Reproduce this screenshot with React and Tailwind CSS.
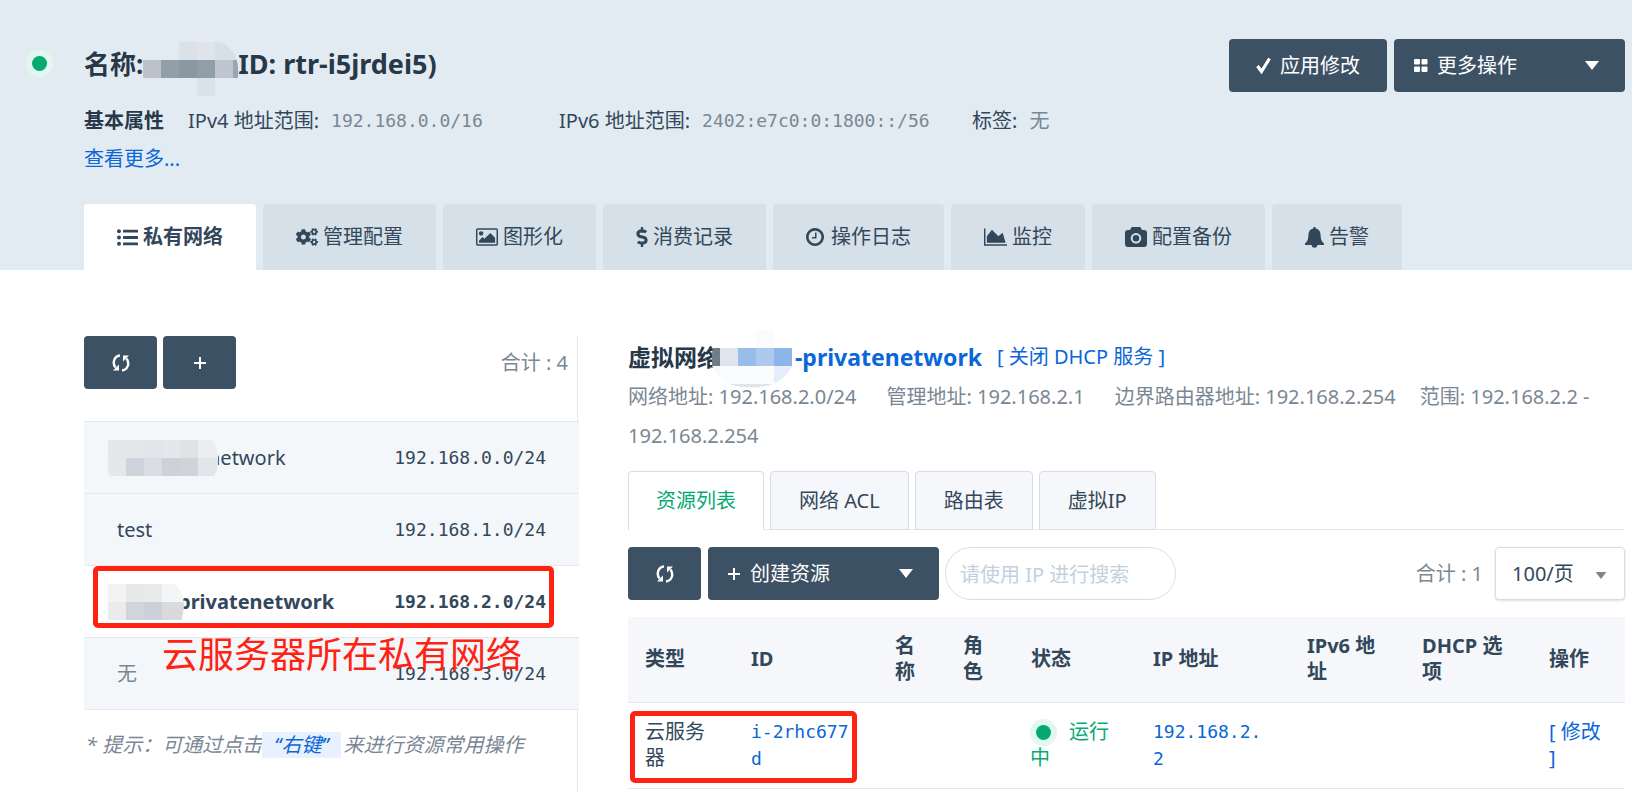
import React from "react";
import { FaCogs, FaDollarSign } from "react-icons/fa";

function ListIcon() {
  return (
    <svg viewBox="0 0 21 17" className="h-[17px] w-[21px]" fill="currentColor" aria-hidden="true">
      <circle cx="2" cy="2.200" r="2" />
      <circle cx="2" cy="8.500" r="2" />
      <circle cx="2" cy="14.800" r="2" />
      <rect x="6" y=".8" width="15" height="2.800" rx=".5" />
      <rect x="6" y="7.100" width="15" height="2.800" rx=".5" />
      <rect x="6" y="13.400" width="15" height="2.800" rx=".5" />
    </svg>
  );
}

function PictureIcon() {
  return (
    <svg viewBox="-64 128 1920 1536" className="h-[18px] w-[22px]" fill="currentColor" aria-hidden="true">
      <path d="M576 576q0 80-56 136t-136 56-136-56-56-136 56-136 136-56 136 56 56 136zm1024 384v448h-1408v-192l320-320 160 160 512-512zm96-704h-1600q-13 0-22.5 9.5t-9.5 22.5v1216q0 13 9.5 22.5t22.5 9.5h1600q13 0 22.5-9.5t9.5-22.5v-1216q0-13-9.5-22.5t-22.5-9.5zm160 32v1216q0 66-47 113t-113 47h-1600q-66 0-113-47t-47-113v-1216q0-66 47-113t113-47h1600q66 0 113 47t47 113z" />
    </svg>
  );
}

function ClockIcon() {
  return (
    <svg viewBox="128 128 1536 1536" className="mr-[2px] size-[18px]" fill="currentColor" aria-hidden="true">
      <path d="M1024 544v448q0 14-9 23t-23 9h-320q-14 0-23-9t-9-23v-64q0-14 9-23t23-9h224v-352q0-14 9-23t23-9h64q14 0 23 9t9 23zm416 352q0-148-73-273t-198-198-273-73-273 73-198 198-73 273 73 273 198 198 273 73 273-73 198-198 73-273zm224 0q0 209-103 385.5t-279.5 279.5-385.5 103-385.5-103-279.5-279.5-103-385.5 103-385.5 279.5-279.5 385.5-103 385.5 103 279.5 279.5 103 385.5z" />
    </svg>
  );
}

function AreaIcon() {
  return (
    <svg viewBox="0 128 2048 1536" className="h-[18px] w-[23px]" fill="currentColor" aria-hidden="true">
      <path d="M2048 1536v128h-2048v-1536h128v1408h1920zM1664 512l256 896h-1664v-576l448-576 576 576z" />
    </svg>
  );
}

function CameraIcon() {
  return (
    <svg viewBox="0 0 22 20" className="h-5 w-[22px]" fill="currentColor" aria-hidden="true">
      <path
        fillRule="evenodd"
        d="M7.6 0h6.8c.8 0 1.4.5 1.7 1.2l.8 1.8H19a3 3 0 0 1 3 3v11a3 3 0 0 1-3 3H3a3 3 0 0 1-3-3V6a3 3 0 0 1 3-3h2.100l.8-1.800C6.200.5 6.800 0 7.600 0ZM11 6a5.300 5.300 0 1 0 0 10.600A5.300 5.300 0 0 0 11 6Zm0 2a3.300 3.300 0 1 1 0 6.600A3.300 3.300 0 0 1 11 8Z"
      />
    </svg>
  );
}

function BellIcon() {
  return (
    <svg viewBox="0 0 19 21" className="h-[21px] w-[19px]" fill="currentColor" aria-hidden="true">
      <path d="M9.500 0c.8 0 1.300.6 1.300 1.400 2.900.6 4.600 2.800 4.700 5.600.2 5 .8 7 3.500 9.500v1.500h-6.700a2.800 2.800 0 0 1-5.600 0H0v-1.500C2.700 14 3.300 12 3.500 7c.1-2.800 1.800-5 4.700-5.600C8.200.6 8.700 0 9.500 0Z" />
    </svg>
  );
}

function RefreshIcon() {
  return (
    <svg viewBox="0 0 18 18" className="size-[18px]" fill="none" stroke="currentColor" strokeWidth="2.400" aria-hidden="true">
      <path d="M8 1.500C2.500 2 -.2 8.500 3.500 13.500" />
      <path d="M1 16.500 7 10.500V16.500Z" fill="currentColor" stroke="none" />
      <path d="M10 16.500C15.500 16 18.200 9.500 14.500 4.500" />
      <path d="M17 1.500 11 7.500V1.500Z" fill="currentColor" stroke="none" />
    </svg>
  );
}

function PlusIcon() {
  return (
    <svg viewBox="0 0 12 12" className="size-3" stroke="currentColor" strokeWidth="2" aria-hidden="true">
      <path d="M6 0v12M0 6h12" />
    </svg>
  );
}

function CaretIcon({ className }) {
  return (
    <svg viewBox="0 0 14 9" className={className} fill="currentColor" aria-hidden="true">
      <path d="M0 0h14L7 9Z" />
    </svg>
  );
}

function CheckIcon() {
  return (
    <svg viewBox="0 0 15 17" className="h-[17px] w-[15px]" fill="none" stroke="currentColor" strokeWidth="3.200" aria-hidden="true">
      <path d="M1.500 9 5.500 14.500 13.500 1.500" />
    </svg>
  );
}

function GridIcon() {
  return (
    <svg viewBox="0 0 14 13" className="h-[13px] w-[14px]" fill="currentColor" aria-hidden="true">
      <rect width="6" height="5.500" rx="1" />
      <rect x="7.500" width="6" height="5.500" rx="1" />
      <rect y="7.500" width="6" height="5.500" rx="1" />
      <rect x="7.500" y="7.500" width="6" height="5.500" rx="1" />
    </svg>
  );
}

function Mosaic({ id, width, height, outline, cells, className }) {
  return (
    <svg viewBox={`0 0 ${width} ${height}`} width={width} height={height} className={className} aria-hidden="true">
      <clipPath id={id}>
        <path d={outline} />
      </clipPath>
      <g clipPath={`url(#${id})`}>
        {cells.map(([x, y, w, h, fill]) => (
          <rect key={`${x}-${y}`} x={x} y={y} width={w} height={h} fill={fill} />
        ))}
      </g>
    </svg>
  );
}

function StatusDot() {
  return (
    <span className="inline-flex size-[27px] shrink-0 items-center justify-center rounded-full bg-[#e2f7ef]">
      <span className="size-[15px] rounded-full bg-[#04aa72]" />
    </span>
  );
}

const MONO = "font-['DejaVu_Sans_Mono',monospace] text-[18px]";
const DARK_BUTTON = "flex h-[53px] items-center rounded bg-[#3d5165] text-white";

const tabs = [
  { label: "私有网络", icon: <ListIcon />, active: true },
  { label: "管理配置", icon: <FaCogs className="size-[22px]" /> },
  { label: "图形化", icon: <PictureIcon /> },
  { label: "消费记录", icon: <FaDollarSign className="h-5 w-3" /> },
  { label: "操作日志", icon: <ClockIcon /> },
  { label: "监控", icon: <AreaIcon /> },
  { label: "配置备份", icon: <CameraIcon /> },
  { label: "告警", icon: <BellIcon /> },
];

function Header() {
  return (
    <header className="flex bg-[#e3ebf2] pr-[7px]">
      <div className="flex w-[84px] shrink-0 pt-[50px] pl-[26px]">
        <StatusDot />
      </div>
      <div className="min-w-0 flex-1">
        <div className="flex items-start justify-between pt-[39px]">
          <h1 className="flex h-[50px] items-center text-[26px] font-bold whitespace-nowrap text-[#273849]">
            名称:
            <Mosaic
              id="name-mask"
              width={95}
              height={56}
              className="mt-3 shrink-0"
              outline="M0 17H4Q14 0 36 0H78Q95 10 95 26V35Q86 54 70 56H36L0 36Z"
              cells={[
                [36, 0, 18, 18, "#dbe1e7"],
                [54, 0, 18, 18, "#dfe4ea"],
                [72, 0, 23, 18, "#d8e0e7"],
                [0, 18, 18, 18, "#bcc1ca"],
                [18, 18, 18, 18, "#929fa9"],
                [36, 18, 18, 18, "#8998a3"],
                [54, 18, 18, 18, "#909ea9"],
                [72, 18, 18, 18, "#bdc5d0"],
                [90, 18, 5, 18, "#9aa5b2"],
                [54, 36, 18, 18, "#dae1e8"],
              ]}
            />
            <span className="text-[27px]">ID: rtr-i5jrdei5)</span>
          </h1>
          <div className="flex gap-[7px]">
            <button type="button" className={`${DARK_BUTTON} w-[158px] justify-center gap-[9px]`}>
              <CheckIcon />
              应用修改
            </button>
            <button type="button" className={`${DARK_BUTTON} w-[231px] gap-[9px] pr-[26px] pl-5`}>
              <GridIcon />
              更多操作
              <CaretIcon className="ml-auto h-[9px] w-[14px]" />
            </button>
          </div>
        </div>
        <dl className="mt-[10px] flex h-[38px] items-center leading-[38px] whitespace-nowrap">
          <dt className="w-[104px] font-bold text-[#273849]">基本属性</dt>
          <dd className="flex w-[371px] gap-3">
            IPv4 地址范围: <span className={`${MONO} text-[#7a8793]`}>192.168.0.0/16</span>
          </dd>
          <dd className="flex w-[413px] gap-3">
            IPv6 地址范围: <span className={`${MONO} text-[#7a8793]`}>2402:e7c0:0:1800::/56</span>
          </dd>
          <dd className="flex gap-3">
            标签: <span className="text-[#7a8793]">无</span>
          </dd>
        </dl>
        <a href="#more" className="block w-fit leading-[38px] text-[#0b66d8]">
          查看更多...
        </a>
        <nav className="mt-[26px] flex gap-[7px]">
          {tabs.map((tab) => (
            <a
              key={tab.label}
              href="#tab"
              className={
                tab.active
                  ? "flex h-[66px] items-center gap-[5px] rounded-t bg-white px-[33px] font-bold whitespace-nowrap"
                  : "flex h-[66px] items-center gap-[5px] rounded-t bg-[#d6e0e8] px-[33px] whitespace-nowrap"
              }
            >
              {tab.icon}
              {tab.label}
            </a>
          ))}
        </nav>
      </div>
    </header>
  );
}

function NetworkRow({ children, cidr, active, muted }) {
  return (
    <li
      className={
        active
          ? "relative flex h-[72px] items-center justify-between border-t border-[#e3e9ef] bg-white px-[33px] font-bold"
          : "relative flex h-[72px] items-center justify-between border-t border-[#e3e9ef] bg-[#f3f7fa] px-[33px]"
      }
    >
      <span className={muted ? "text-[#7a8793]" : "flex items-center"}>{children}</span>
      <span className={MONO}>{cidr}</span>
      {active && (
        <span className="absolute top-0 right-[25px] bottom-[9px] left-[9px] rounded-[5px] border-[5px] border-[#ff2213]" />
      )}
    </li>
  );
}

function Sidebar() {
  return (
    <aside className="flex w-[495px] shrink-0 flex-col">
      <div className="mr-px flex h-[85px] items-start border-r border-[#e3e9ef] pr-[9px]">
        <button type="button" aria-label="刷新" className={`${DARK_BUTTON} w-[73px] justify-center`}>
          <RefreshIcon />
        </button>
        <button type="button" aria-label="添加" className={`${DARK_BUTTON} ml-[6px] w-[73px] justify-center`}>
          <PlusIcon />
        </button>
        <span className="ml-auto leading-[53px] text-[#7a8793]">合计 : 4</span>
      </div>
      <ul className="relative border-b border-[#e3e9ef]">
        <NetworkRow cidr="192.168.0.0/24">
          <Mosaic
            id="net-mask-a"
            width={110}
            height={36}
            className="relative -mr-[10px] -ml-[9px] shrink-0"
            outline="M0 0H104Q116 18 106 36H4Q0 36 0 32Z"
            cells={[
              [0, 0, 18, 18, "#e3e7ea"],
              [18, 0, 18, 18, "#e4e7ea"],
              [36, 0, 18, 18, "#e2e5ea"],
              [54, 0, 18, 18, "#e4e8ec"],
              [72, 0, 18, 18, "#dee3e6"],
              [90, 0, 20, 18, "#eaeef1"],
              [0, 18, 18, 18, "#e4e8eb"],
              [18, 18, 18, 18, "#cfd3db"],
              [36, 18, 18, 18, "#d9dce2"],
              [54, 18, 18, 18, "#cfd1d7"],
              [72, 18, 18, 18, "#d0d4d8"],
              [90, 18, 20, 18, "#e2e6ea"],
            ]}
          />
          network
        </NetworkRow>
        <NetworkRow cidr="192.168.1.0/24">test</NetworkRow>
        <NetworkRow cidr="192.168.2.0/24" active>
          <Mosaic
            id="net-mask-b"
            width={76}
            height={36}
            className="relative -mr-[6px] -ml-[9px] shrink-0"
            outline="M0 0H67Q76 8 76 22L74 36H0Z"
            cells={[
              [0, 0, 18, 18, "#f3f3f4"],
              [18, 0, 18, 18, "#e7e8ea"],
              [36, 0, 18, 18, "#e9eaec"],
              [54, 0, 22, 18, "#f4f5f7"],
              [0, 18, 18, 18, "#eaecec"],
              [18, 18, 18, 18, "#d1d4da"],
              [36, 18, 18, 18, "#cdd0d8"],
              [54, 18, 22, 18, "#d8dade"],
            ]}
          />
          privatenetwork
        </NetworkRow>
        <NetworkRow cidr="192.168.3.0/24" muted>
          无
        </NetworkRow>
        <li className="absolute bottom-[28px] left-[78px] text-[36px] leading-[52px] whitespace-nowrap text-[#ff2213]">
          云服务器所在私有网络
        </li>
      </ul>
      <p className="mr-px flex-1 border-r border-[#e3e9ef] pt-[22px] pl-[2px] leading-[26px] text-[#7a8793] italic">
        * 提示：可通过点击
        <span className="mr-[3px] inline-block bg-[#e8f1fd] px-3 text-[#0b66d8]">“右键”</span>
        来进行资源常用操作
      </p>
    </aside>
  );
}

const subTabs = ["资源列表", "网络 ACL", "路由表", "虚拟IP"];

function SubTabs() {
  return (
    <nav className="mt-[16px] flex gap-[6px] border-b border-[#e3e9ef]">
      {subTabs.map((label, index) => (
        <a
          key={label}
          href="#subtab"
          className={
            index === 0
              ? "-mb-px h-[59px] rounded-t border border-b-0 border-[#d5dee7] bg-white px-[27px] leading-[58px] text-[#04aa72]"
              : "-mb-px h-[59px] rounded-t border border-[#d5dee7] bg-[#f5f7fa] px-7 leading-[58px]"
          }
        >
          {label}
        </a>
      ))}
    </nav>
  );
}

function Toolbar() {
  return (
    <div className="mt-[17px] flex items-center">
      <button type="button" aria-label="刷新资源" className={`${DARK_BUTTON} w-[73px] justify-center`}>
        <RefreshIcon />
      </button>
      <button type="button" className={`${DARK_BUTTON} ml-[7px] w-[231px] gap-[10px] pr-[26px] pl-5`}>
        <PlusIcon />
        创建资源
        <CaretIcon className="ml-auto h-[9px] w-[14px]" />
      </button>
      <input
        type="search"
        aria-label="请使用 IP 进行搜索"
        placeholder="请使用 IP 进行搜索"
        className="ml-[6px] h-[53px] w-[231px] rounded-full border border-[#d5dee7] px-[14px] pt-[2px] placeholder:text-[#c3d1de]"
      />
      <span className="mr-3 ml-auto text-[#7a8793]">合计 : 1</span>
      <span className="relative">
        <select
          aria-label="每页数量"
          className="h-[53px] w-[130px] appearance-none rounded border border-[#d5dee7] bg-white pl-4 shadow-sm"
        >
          <option>100/页</option>
        </select>
        <CaretIcon className="pointer-events-none absolute top-[25px] right-[18px] h-[7px] w-3 text-[#7a8793]" />
      </span>
    </div>
  );
}

function ResourceTable() {
  return (
    <div className="relative mt-[17px]">
      <table className="w-full table-fixed border-collapse text-left leading-[26px]">
        <colgroup>
          <col className="w-[106px]" />
          <col className="w-[144px]" />
          <col className="w-[68px]" />
          <col className="w-[68px]" />
          <col className="w-[122px]" />
          <col className="w-[154px]" />
          <col className="w-[115px]" />
          <col className="w-[127px]" />
          <col />
        </colgroup>
        <thead>
          <tr className="h-[85px] border-b border-[#e3e9ef] bg-[#f5f7fa]">
            {["类型", "ID", "名称", "角色", "状态", "IP 地址", "IPv6 地址", "DHCP 选项", "操作"].map((name) => (
              <th key={name} className="px-[17px] font-bold">
                {name}
              </th>
            ))}
          </tr>
        </thead>
        <tbody>
          <tr className="h-[86px] border-b border-[#e3e9ef]">
            <td className="px-[17px]">云服务器</td>
            <td className="px-[17px]">
              <a href="#resource" className={`${MONO} text-[#0b66d8]`}>
                i-2rhc677
                <br />d
              </a>
            </td>
            <td />
            <td />
            <td className="pr-[17px] pl-4 text-[#04aa72]">
              <span className="mr-3 inline-flex h-[26px] align-top">
                <StatusDot />
              </span>
              运行中
            </td>
            <td className="px-[17px]">
              <a href="#address" className={`${MONO} text-[#0b66d8]`}>
                192.168.2.
                <br />2
              </a>
            </td>
            <td />
            <td />
            <td className="px-[17px]">
              <a href="#edit" className="text-[#0b66d8]">
                [ 修改 ]
              </a>
            </td>
          </tr>
        </tbody>
      </table>
      <div className="pointer-events-none absolute top-[94px] left-[2px] h-[72px] w-[227px] rounded-[5px] border-[5px] border-[#ff2213]" />
    </div>
  );
}

function Detail() {
  return (
    <section className="min-w-0 flex-1">
      <div className="relative flex h-[41px] items-center whitespace-nowrap">
        <h2 className="flex items-center text-[23px] font-bold">
          <span className="w-[167px] text-[#273849]">虚拟网络</span>
          <a href="#network" className="text-[#0b66d8]">
            -privatenetwork
          </a>
        </h2>
        <a href="#dhcp" className="ml-[15px] text-[#0b66d8]">
          [ 关闭 DHCP 服务 ]
        </a>
        <Mosaic
          id="vnet-mask"
          width={81}
          height={58}
          className="absolute -top-[6px] left-[84px]"
          outline="M8 8Q0 16 0 24V36Q10 52 20 55Q38 60 58 55Q74 50 80 36V18H62V0H20Z"
          cells={[
            [0, 0, 8, 18, "#ffffff"],
            [8, 0, 36, 18, "#ffffff"],
            [44, 0, 18, 18, "#fafbfd"],
            [0, 18, 8, 18, "#707c88"],
            [8, 18, 18, 18, "#e0e5ed"],
            [26, 18, 18, 18, "#98bdea"],
            [44, 18, 18, 18, "#afc9ee"],
            [62, 18, 19, 18, "#8eb5e9"],
            [0, 36, 8, 18, "#f8f9fb"],
            [8, 36, 54, 18, "#fbfcfd"],
            [62, 36, 19, 18, "#e6eefb"],
            [8, 54, 54, 4, "#e2e4e7"],
          ]}
        />
      </div>
      <div className="flex flex-wrap leading-[39px] whitespace-nowrap text-[#7a8793]">
        <span className="mr-[30px]">网络地址: 192.168.2.0/24</span>
        <span className="mr-[30px]">管理地址: 192.168.2.1</span>
        <span className="mr-[24px]">边界路由器地址: 192.168.2.254</span>
        <span>范围: 192.168.2.2 -</span>
        <span>192.168.2.254</span>
      </div>
      <SubTabs />
      <Toolbar />
      <ResourceTable />
    </section>
  );
}

export default function App() {
  return (
    <div className="flex min-h-screen flex-col bg-white font-['Noto_Sans','Noto_Sans_CJK_SC',sans-serif] text-[20px] leading-[26px] text-[#33475b]">
      <Header />
      <main className="flex flex-1 gap-[49px] pt-[66px] pr-[7px] pl-[84px]">
        <Sidebar />
        <Detail />
      </main>
    </div>
  );
}
